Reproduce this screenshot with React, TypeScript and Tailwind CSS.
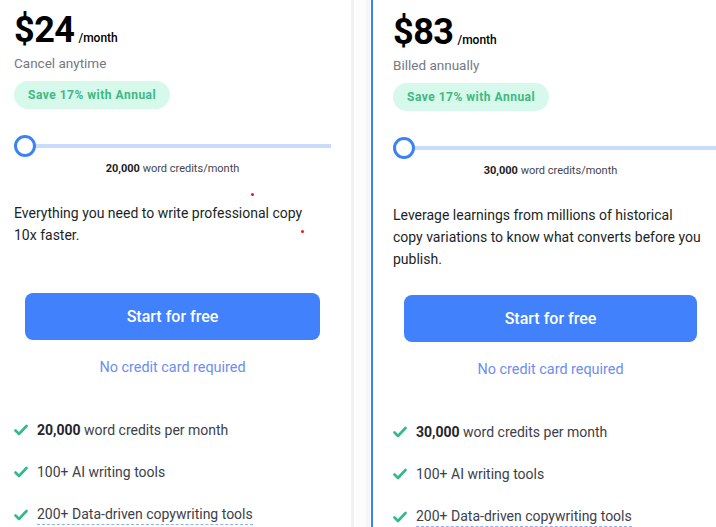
import React from 'react';

interface Plan {
  price: string;
  billing: string;
  credits: string;
  description: string;
  annual: boolean;
}

const plans: Plan[] = [
  {
    price: '$24',
    billing: 'Cancel anytime',
    credits: '20,000',
    description: 'Everything you need to write professional copy 10x faster.',
    annual: false,
  },
  {
    price: '$83',
    billing: 'Billed annually',
    credits: '30,000',
    description:
      'Leverage learnings from millions of historical copy variations to know what converts before you publish.',
    annual: true,
  },
];

function CheckIcon() {
  return (
    <svg width="14" height="12" viewBox="0 0 14 12" fill="none" className="shrink-0">
      <path d="M1.5 6.5 L5 10 L12.5 2" stroke="#34b98a" strokeWidth="2.6" strokeLinecap="round" strokeLinejoin="round" />
    </svg>
  );
}

function PlanCard({ plan }: { plan: Plan }) {
  return (
    <div className="relative flex flex-col">
      {/* Price */}
      <div className="flex items-baseline gap-[4px]">
        <span className="text-[36px] leading-[40px] font-bold tracking-[-0.5px] text-black">{plan.price}</span>
        <span className="text-[12px] font-medium text-black">/month</span>
      </div>
      <p className="mt-[3px] text-[13.5px] leading-5 text-[#747985]">{plan.billing}</p>

      {/* Badge */}
      <div className="mt-[8px]">
        <span className="inline-flex h-[28px] items-center rounded-full bg-[#d6f9ec] px-[14px] text-[12px] font-bold tracking-[0.5px] text-[#3fb882]">
          Save 17% with Annual
        </span>
      </div>

      {/* Slider */}
      <div className={`mt-[26px] flex h-[22px] items-center ${plan.annual ? 'mr-[-12px]' : ''}`}>
        <div className="h-[22px] w-[22px] shrink-0 rounded-full border-[3px] border-[#3b82f6] bg-white" />
        <div className="h-[4px] flex-1 bg-[#c9dcfc]" />
      </div>
      <p className="mt-[4px] text-center text-[11px] leading-4 text-[#3f4450]">
        <span className="font-bold text-[#222]">{plan.credits}</span> word credits/month
      </p>

      {/* Description */}
      <div className="mt-[25px] h-[66px] w-[312px]">
        <p className="text-[14px] leading-[22px] text-[#1c1f26]">{plan.description}</p>
      </div>

      {/* CTA */}
      <div className="mt-[25px] px-[11px]">
        <button className="flex h-[47px] w-full items-center justify-center rounded-lg bg-[#4181fb] text-[16px] font-medium text-white">
          Start for free
        </button>
      </div>
      <p className="mt-[18px] text-center text-[14.4px] leading-5 text-[#6c8df2]">No credit card required</p>

      {/* Features */}
      <ul className="mt-[42px] flex flex-col gap-[22px] text-[14px] leading-5 text-[#3c404b]">
        <li className="flex items-center gap-[9px]">
          <CheckIcon />
          <span>
            <span className="font-bold text-[#23262d]">{plan.credits}</span> word credits per month
          </span>
        </li>
        <li className="flex items-center gap-[9px]">
          <CheckIcon />
          <span>100+ AI writing tools</span>
        </li>
        <li className="flex items-center gap-[9px]">
          <CheckIcon />
          <span className="border-b border-dashed border-[#8fb0f8]">200+ Data-driven copywriting tools</span>
        </li>
      </ul>
    </div>
  );
}

export default function App() {
  return (
    <div className="flex h-[527px] w-[716px] overflow-hidden bg-white font-['Roboto',sans-serif]">
      {/* Monthly */}
      <div className="relative w-[351px] shrink-0 pl-[14px] pr-[20px] pt-[10px]">
        <PlanCard plan={plans[0]} />
        <span className="absolute left-[251px] top-[193px] h-[3px] w-[3px] rounded-full bg-[#e01b1b]" />
        <span className="absolute left-[301px] top-[230px] h-[3px] w-[3px] rounded-full bg-[#e01b1b]" />
      </div>

      {/* Divider strip */}
      <div className="flex w-[20px] shrink-0">
        <div className="w-[3px] bg-[#f1f1f1]" />
        <div className="flex-1 bg-[#fcfcfc]" />
        <div className="w-[4px] bg-[#f5f5f5]" />
        <div className="w-[1px] bg-white" />
      </div>

      {/* Annual */}
      <div className="w-[345px] shrink-0 border-l-2 border-[#3b82f6] pl-[20px] pr-[8px] pt-[12px]">
        <PlanCard plan={plans[1]} />
      </div>
    </div>
  );
}
